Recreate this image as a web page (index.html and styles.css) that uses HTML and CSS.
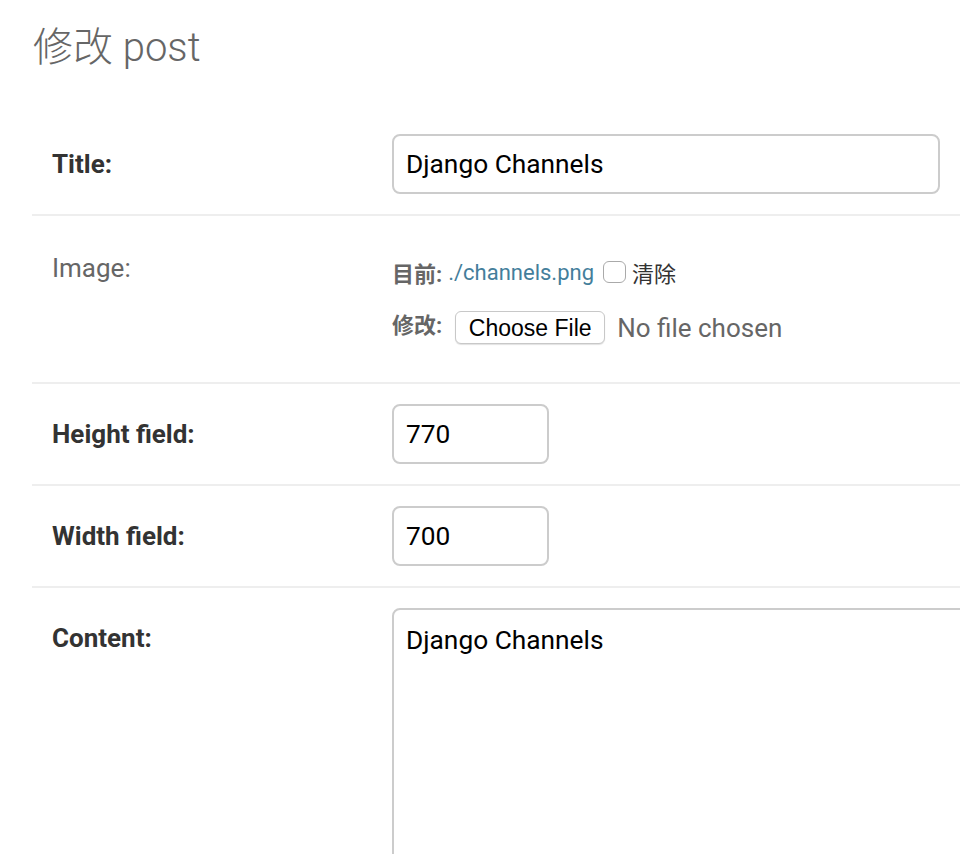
FILE: index.html
```html
<!DOCTYPE html>
<html lang="zh">
<head>
<meta charset="utf-8">
<title>修改 post</title>
<link rel="stylesheet" href="styles.css">
</head>
<body>
<div class="content">
  <h1 class="page-title">修改 post</h1>
  <form class="change-form">
    <div class="form-row">
      <label class="field-label required">Title:</label>
      <div class="field-input"><input class="text-input title-input" type="text" value="Django Channels"></div>
    </div>
    <div class="form-row image-row">
      <label class="field-label optional">Image:</label>
      <div class="file-upload">
        <div class="upload-line current-line">
          <span class="upload-caption">目前:</span>
          <a class="file-link" href="#">./channels.png</a>
          <input class="clear-box" type="checkbox">
          <span class="clear-label">清除</span>
        </div>
        <div class="upload-line change-line">
          <span class="upload-caption">修改:</span>
          <button class="file-btn" type="button">Choose File</button>
          <span class="no-file">No file chosen</span>
        </div>
      </div>
    </div>
    <div class="form-row">
      <label class="field-label required">Height field:</label>
      <div class="field-input"><input class="text-input num-input" type="text" value="770"></div>
    </div>
    <div class="form-row">
      <label class="field-label required">Width field:</label>
      <div class="field-input"><input class="text-input num-input" type="text" value="700"></div>
    </div>
    <div class="form-row content-row">
      <label class="field-label required">Content:</label>
      <div class="field-input"><textarea class="text-area">Django Channels</textarea></div>
    </div>
  </form>
</div>
</body>
</html>
```
FILE: styles.css
```css
html, body {
  margin: 0;
  padding: 0;
  background: #fff;
  overflow: hidden;
}
body {
  font-family: Roboto, "Noto Sans CJK SC", sans-serif;
  color: #333;
}
.content {
  padding: 0 0 0 32px;
}
.page-title {
  margin: 0;
  padding: 22px 0 0 1px;
  height: 114px;
  box-sizing: border-box;
  font-size: 40px;
  font-weight: 300;
  color: #666;
  line-height: 52px;
}
.change-form {
  margin: 0;
}
.form-row {
  display: flex;
  align-items: flex-start;
  padding: 20px 0 20px 20px;
  border-bottom: 2px solid #eee;
}
.field-label {
  flex: 0 0 340px;
  font-size: 26px;
  line-height: 60px;
  color: #666;
}
.field-label.required {
  font-weight: bold;
  color: #333;
}
.text-input {
  box-sizing: border-box;
  height: 60px;
  padding: 0 12px;
  border: 2px solid #ccc;
  border-radius: 8px;
  font-family: Roboto, sans-serif;
  font-size: 26.3px;
  color: #000;
  outline: none;
  display: block;
}
.title-input { width: 548px; }
.num-input { width: 157px; }
.image-row .field-label {
  line-height: 26px;
  padding-top: 19px;
}
.image-row { padding-bottom: 38px; }
.file-upload {
  font-size: 22px;
  color: #666;
  padding-top: 16px;
}
.upload-line {
  display: flex;
  align-items: center;
}
.current-line { height: 40px; }
.change-line {
  height: 33px;
  margin-top: 19px;
}
.upload-caption {
  font-weight: bold;
  color: #666;
  margin-right: 6px;
}
.change-line .upload-caption {
  align-self: flex-start;
  margin-top: -4px;
  margin-right: 13px;
}
.file-link {
  color: #447e9b;
  text-decoration: none;
}
.clear-box {
  appearance: none;
  -webkit-appearance: none;
  width: 23px;
  height: 22px;
  margin: 0 6px 0 9px;
  border: 1.5px solid #aaa;
  border-radius: 6px;
  background: #fff;
  box-sizing: border-box;
}
.clear-label {
  color: #333;
}
.file-btn {
  box-sizing: border-box;
  width: 150px;
  height: 33px;
  padding: 0;
  border: 1px solid #c8c8c8;
  border-radius: 6px;
  background: #fff;
  box-shadow: 0 1px 1px rgba(0,0,0,0.12);
  font-family: "Liberation Sans", Arial, sans-serif;
  font-size: 23px;
  line-height: 33px;
  color: #000;
}
.no-file {
  margin-left: 12px;
  font-size: 26px;
  color: #666;
}
.content-row { border-bottom: none; }
.text-area {
  display: block;
  box-sizing: border-box;
  width: 1220px;
  height: 420px;
  padding: 10px 12px;
  border: 2px solid #ccc;
  border-radius: 8px;
  font-family: Roboto, sans-serif;
  font-size: 26.3px;
  line-height: 40px;
  color: #000;
  resize: none;
  outline: none;
}
.content-row .field-label { line-height: 60px; }
```
